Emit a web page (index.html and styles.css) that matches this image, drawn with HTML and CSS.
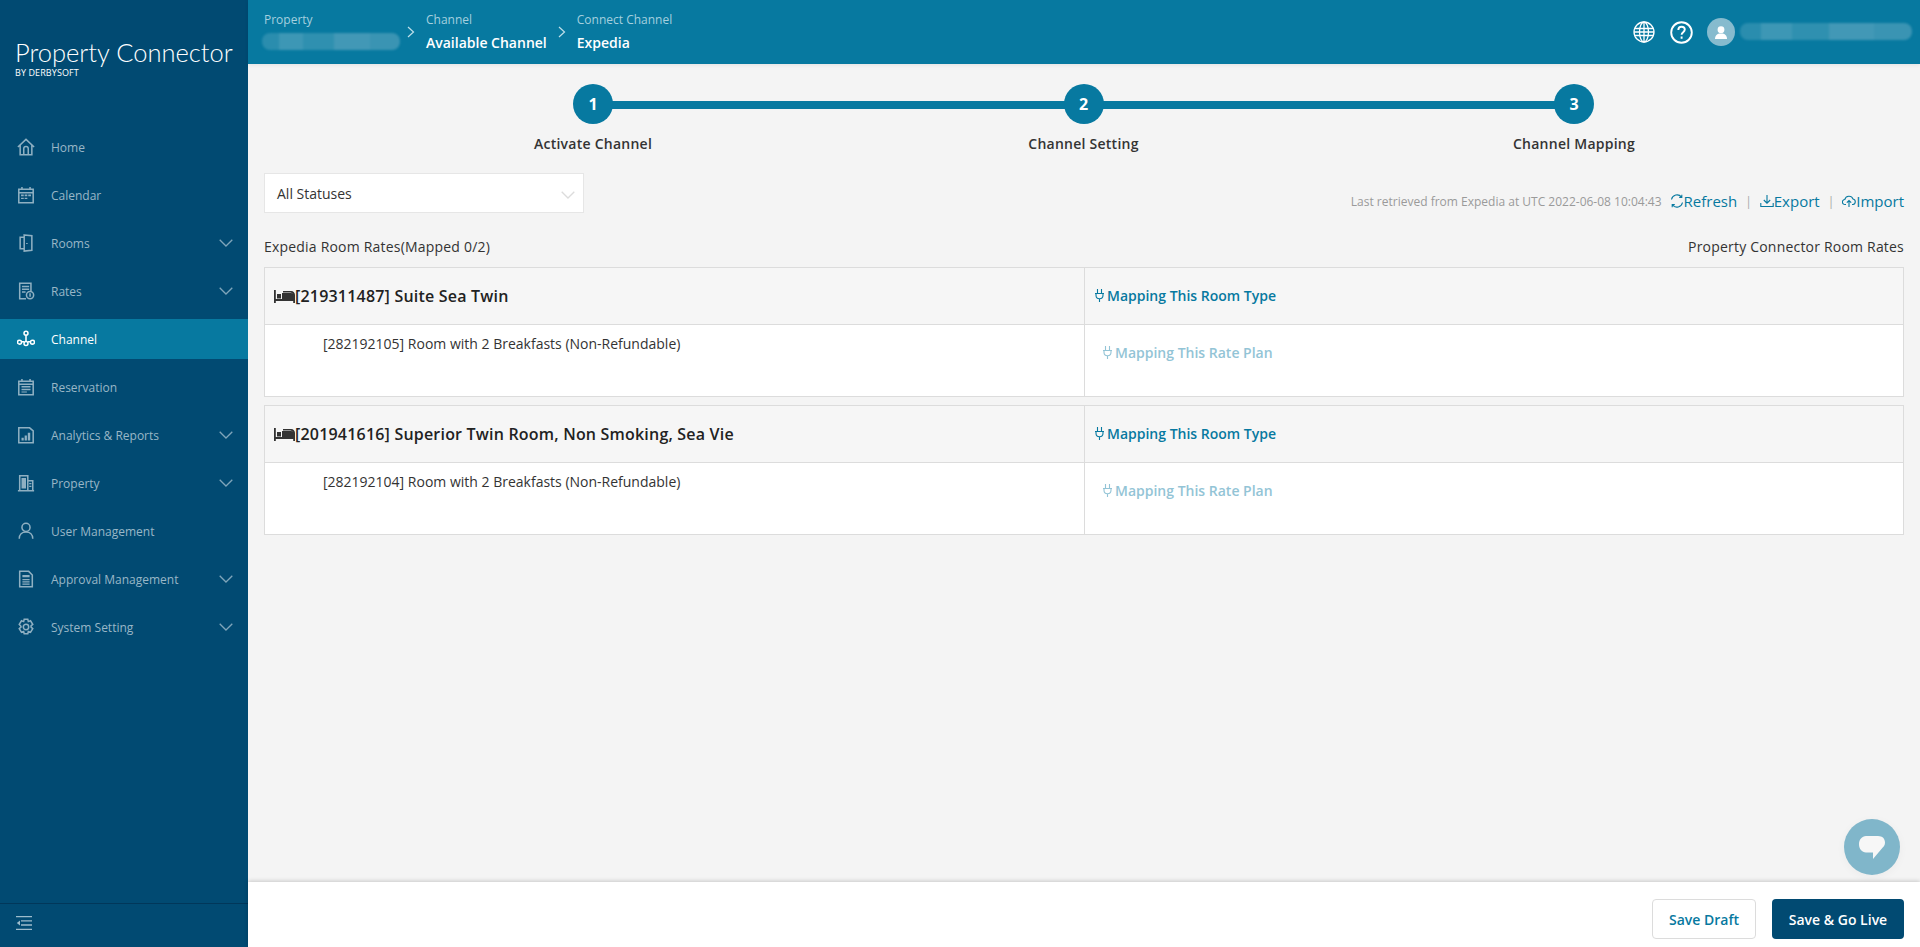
FILE: index.html
```html
<!DOCTYPE html>
<html lang="en">
<head>
  <meta charset="UTF-8" />
  <title>Property Connector</title>
  <link rel="stylesheet" href="styles.css">
</head>
<body>
  <svg class="sprite" width="0" height="0">
    <symbol id="plug" viewBox="0 0 9 13">
      <path d="M0 4.500h9M1 4.500v1.700a3.500 3.500 0 0 0 7 0V4.500M2.500 4.500V0M6.500 4.500V0M4.500 9.500V13" fill="none" stroke="currentColor" stroke-width="1.100"/>
    </symbol>
    <symbol id="bed" viewBox="0 0 21 13">
      <path d="M0 0h1.800v9h17.400V5.500c0-1.600-1.300-3-3-3H9V1h8.200c2.200 0 3.800 1.800 3.800 4v8h-1.800v-2H1.800v2H0z" fill="#333"/>
      <path d="M8 3h9c1.800 0 3 1.300 3 3v3H8zM3 4h4v4.500H3z" fill="#333"/>
    </symbol>
    <symbol id="chev" viewBox="0 0 14 8">
      <path d="M.7.7 7 7l6.300-6.300" fill="none" stroke="currentColor" stroke-width="1.300"/>
    </symbol>
  </svg>

  <div class="app">
    <aside class="sidebar">
      <div class="logo">
        <div class="logo-name">Property Connector</div>
        <div class="logo-by">BY DERBYSOFT</div>
      </div>
      <nav class="menu">
        <a class="menu-item">
          <svg class="menu-icon" viewBox="0 0 20 20"><path d="M1 10 10 1.500l9 8.500M3.500 8v10.500h13V8M7.500 18.500V12a2.500 2.500 0 0 1 5 0v6.500" /></svg>
          <span>Home</span>
        </a>
        <a class="menu-item">
          <svg class="menu-icon" viewBox="0 0 20 20"><path d="M2 3.500h16v15H2zM5.500 1v3.500M14.500 1v3.500M2 7.500h16" /><path class="solid" d="M4.500 9.500h3v2h-3zM8.500 9.500h3v2h-3zM12.500 9.500h3v2h-3zM4.500 13h3v1.500h-3zM8.500 13h3v1.500h-3z" /></svg>
          <span>Calendar</span>
        </a>
        <a class="menu-item">
          <svg class="menu-icon" viewBox="0 0 20 20"><path d="M8 3.500H3.500v13H8M8 1l8.500 1v16L8 19zM11 10v1" /></svg>
          <span>Rooms</span>
          <svg class="menu-chev"><use href="#chev"/></svg>
        </a>
        <a class="menu-item">
          <svg class="menu-icon" viewBox="0 0 20 20"><path d="M10 18.500H3V1.500h12.500V10M5.500 5h8M5.500 8h8M5.500 11h4" /><circle cx="14.500" cy="14.500" r="4"/><path d="M14.500 12.500v4" /></svg>
          <span>Rates</span>
          <svg class="menu-chev"><use href="#chev"/></svg>
        </a>
        <a class="menu-item active">
          <svg class="menu-icon" viewBox="0 0 20 20"><circle cx="10" cy="3.500" r="2.200"/><circle cx="2.800" cy="13.500" r="2.200"/><circle cx="10" cy="15" r="2.200"/><circle cx="17.200" cy="13.500" r="2.200"/><path d="M10 5.700v7M5 13h2.800M12.200 13h2.800" /></svg>
          <span>Channel</span>
        </a>
        <a class="menu-item">
          <svg class="menu-icon" viewBox="0 0 20 20"><path d="M2 3.500h16v15H2zM5.500 1v3.500M14.500 1v3.500M2 7h16" /><path class="solid" d="M5 9h10v1.500H5zM5 12h10v1.500H5zM5 15h6v1.200H5z" /></svg>
          <span>Reservation</span>
        </a>
        <a class="menu-item">
          <svg class="menu-icon" viewBox="0 0 20 20"><path d="M2 2h12l4 3.500v13H2z" /><path class="solid" d="M5 13h2.500v3H5zM8.500 10.500H11V16H8.500zM12 7.500h2.700V16H12z" /></svg>
          <span>Analytics &amp; Reports</span>
          <svg class="menu-chev"><use href="#chev"/></svg>
        </a>
        <a class="menu-item">
          <svg class="menu-icon" viewBox="0 0 20 20"><path d="M3 18V2h9v16M12 7.500h5.500V18M1 18.500h18" /><path class="solid" d="M5 4.500h5V16H5zM13.500 10h2.500v1.500h-2.500zM13.500 13h2.500v1.500h-2.500z" /></svg>
          <span>Property</span>
          <svg class="menu-chev"><use href="#chev"/></svg>
        </a>
        <a class="menu-item">
          <svg class="menu-icon" viewBox="0 0 20 20"><circle cx="10" cy="6" r="4.500"/><path d="M2.500 18.500c0-4.500 3-7.500 7.500-7.500s7.500 3 7.500 7.500" /></svg>
          <span>User Management</span>
        </a>
        <a class="menu-item">
          <svg class="menu-icon" viewBox="0 0 20 20"><path d="M3 1.500h10l4 4v13H3z" /><path class="solid" d="M6 5.500h8v2.500H6zM6 10h8v1.300H6zM6 12.500h8v1.300H6zM6 15h8v1.300H6z" /></svg>
          <span>Approval Management</span>
          <svg class="menu-chev"><use href="#chev"/></svg>
        </a>
        <a class="menu-item">
          <svg class="menu-icon" viewBox="0 0 20 20"><path d="M8 1.500h4l.6 2.500 2.400-.9 2.500 4-1.900 1.700v1.400l1.900 1.700-2.500 4-2.400-.9-.6 2.500H8l-.6-2.500-2.400.9-2.500-4 1.900-1.700V9.300L2.500 7.100l2.500-4 2.400.9z"/><circle cx="10" cy="10" r="3"/></svg>
          <span>System Setting</span>
          <svg class="menu-chev"><use href="#chev"/></svg>
        </a>
      </nav>
      <div class="sidebar-foot">
        <svg class="collapse-icon" viewBox="0 0 16 14"><path d="M0 .7h16M5 4.800h11M5 9h11M0 13.300h16" fill="none" stroke="currentColor" stroke-width="1.300"/><path d="M4 4.500v5L.8 7z" fill="currentColor"/></svg>
      </div>
    </aside>

    <div class="main">
      <header class="topbar">
        <div class="crumb crumb-first">
          <div class="crumb-label">Property</div>
          <div class="blur-name blur-property"></div>
        </div>
        <svg class="crumb-sep" viewBox="0 0 8 12"><path d="M1 1l5.500 5L1 11" /></svg>
        <div class="crumb crumb-mid">
          <div class="crumb-label">Channel</div>
          <div class="crumb-value">Available Channel</div>
        </div>
        <svg class="crumb-sep" viewBox="0 0 8 12"><path d="M1 1l5.500 5L1 11" /></svg>
        <div class="crumb">
          <div class="crumb-label">Connect Channel</div>
          <div class="crumb-value">Expedia</div>
        </div>
        <div class="top-actions">
          <svg class="top-icon" viewBox="0 0 22 22"><circle cx="11" cy="11" r="10"/><ellipse cx="11" cy="11" rx="4.500" ry="10"/><path d="M11 1v20M1.800 7.500h18.400M1.800 14.500h18.400M1 11h20"/></svg>
          <svg class="top-icon help" viewBox="0 0 23 23"><circle cx="11.500" cy="11.500" r="10.300"/><path d="M8.300 9c0-2.200 1.500-3.300 3.300-3.300 1.900 0 3.200 1.200 3.200 2.900 0 2.500-3.200 2.600-3.200 5.100M11.600 15.500v2.200"/></svg>
          <div class="avatar">
            <svg viewBox="0 0 12 13" width="12" height="13"><circle cx="6" cy="3.700" r="3.400" fill="#fff"/><path d="M0 13c0-3.500 2-5.500 6-5.500s6 2 6 5.500z" fill="#fff"/></svg>
          </div>
          <div class="blur-name blur-user"></div>
        </div>
      </header>

      <main class="content">
        <div class="steps">
          <div class="step">
            <div class="step-num">1</div>
            <div class="step-label">Activate Channel</div>
          </div>
          <div class="step">
            <div class="step-num">2</div>
            <div class="step-label">Channel Setting</div>
          </div>
          <div class="step">
            <div class="step-num">3</div>
            <div class="step-label">Channel Mapping</div>
          </div>
        </div>

        <div class="toolbar">
          <div class="status-select">
            <span>All Statuses</span>
            <svg class="select-chev"><use href="#chev"/></svg>
          </div>
          <div class="tools">
            <span class="retrieved">Last retrieved from Expedia at UTC 2022-06-08 10:04:43</span>
            <a class="tool">
              <svg viewBox="0 0 14 14" width="14" height="14"><path d="M1.500 5.500A5.700 5.700 0 0 1 11.500 3M12.500 8.500A5.700 5.700 0 0 1 2.500 11M11.800.8v2.600H9.200M2.200 13.200v-2.600h2.600" fill="none" stroke="currentColor" stroke-width="1.100"/></svg>Refresh
            </a>
            <span class="tool-sep">|</span>
            <a class="tool">
              <svg viewBox="0 0 14 14" width="14" height="14"><path d="M7 1v8M3.800 6 7 9.200 10.200 6M.8 9v3.500h12.400V9" fill="none" stroke="currentColor" stroke-width="1.100"/></svg>Export
            </a>
            <span class="tool-sep">|</span>
            <a class="tool">
              <svg viewBox="0 0 14 14" width="14" height="14"><path d="M4 10.500H3A2.500 2.500 0 0 1 2.800 5.500 4.300 4.300 0 0 1 11 5a2.800 2.800 0 0 1 0 5.500h-1M7 13V6.500M4.800 8.700 7 6.500l2.200 2.200" fill="none" stroke="currentColor" stroke-width="1.100"/></svg>Import
            </a>
          </div>
        </div>

        <div class="rates-head">
          <span>Expedia Room Rates(Mapped 0/2)</span>
          <span>Property Connector Room Rates</span>
        </div>

        <section class="room-card">
          <div class="room-title"><svg class="bed"><use href="#bed"/></svg>[219311487] Suite Sea Twin</div>
          <div class="room-map"><a class="map-link"><svg class="plug"><use href="#plug"/></svg>Mapping This Room Type</a></div>
          <div class="rate-name">[282192105] Room with 2 Breakfasts (Non-Refundable)</div>
          <div class="rate-map"><a class="map-link disabled"><svg class="plug"><use href="#plug"/></svg>Mapping This Rate Plan</a></div>
        </section>

        <section class="room-card">
          <div class="room-title"><svg class="bed"><use href="#bed"/></svg>[201941616] Superior Twin Room, Non Smoking, Sea Vie</div>
          <div class="room-map"><a class="map-link"><svg class="plug"><use href="#plug"/></svg>Mapping This Room Type</a></div>
          <div class="rate-name">[282192104] Room with 2 Breakfasts (Non-Refundable)</div>
          <div class="rate-map"><a class="map-link disabled"><svg class="plug"><use href="#plug"/></svg>Mapping This Rate Plan</a></div>
        </section>

        <button class="chat-btn">
          <svg viewBox="0 0 28 25" width="28" height="25"><path d="M8 1h12c4.500 0 7 2.800 7 6.500 0 2.500-1 3.700-2.500 5.300L15 24v-6.500H8c-4 0-7-3.500-7-8.200S4 1 8 1z" fill="#f7f7f7"/></svg>
        </button>
      </main>

      <footer class="footer">
        <button class="btn btn-plain">Save Draft</button>
        <button class="btn btn-primary">Save &amp; Go Live</button>
      </footer>
    </div>
  </div>
</body>
</html>
```

FILE: styles.css
```css
* {
  box-sizing: border-box;
}

html, body {
  height: 100%;
}

body {
  margin: 0;
  font-family: 'Open Sans', sans-serif;
  font-size: 14px;
  color: #333;
  background: #f4f4f4;
  overflow: hidden;
}

.sprite {
  position: absolute;
}

.app {
  display: flex;
  height: 947px;
}

/* sidebar */
.sidebar {
  width: 248px;
  flex: none;
  display: flex;
  flex-direction: column;
  background: #014a72;
}

.logo {
  height: 127px;
  padding: 38px 0 0 15px;
  color: #fff;
}

.logo-name {
  font-family: Lato, sans-serif;
  font-size: 25.500px;
  font-weight: 300;
  line-height: 29px;
  white-space: nowrap;
}

.logo-by {
  font-size: 9px;
  line-height: 12px;
  margin-top: 0;
  letter-spacing: 0.1px;
}

.menu {
  flex: 1;
  display: flex;
  flex-direction: column;
  gap: 8px;
}

.menu-item {
  height: 40px;
  display: flex;
  align-items: center;
  padding: 0 15px 0 17px;
  font-size: 12px;
  color: #99b7c7;
}

.menu-item.active {
  background: #0779a0;
  color: #fff;
}

.menu-icon {
  width: 18px;
  height: 18px;
  margin-right: 16px;
  fill: none;
  stroke: #8fb0c2;
  stroke-width: 1.700;
}

.menu-icon .solid {
  fill: #8fb0c2;
  stroke: none;
}

.active .menu-icon {
  stroke: #fff;
}

.menu-chev {
  width: 14px;
  height: 8px;
  margin-left: auto;
  color: #7fa5ba;
}

.sidebar-foot {
  height: 44px;
  border-top: 1px solid #01375a;
  padding: 12px 0 0 16px;
}

.collapse-icon {
  display: block;
  width: 16px;
  height: 14px;
  color: #9dbccc;
}

/* top bar */
.main {
  flex: 1;
  min-width: 0;
  display: flex;
  flex-direction: column;
}

.topbar {
  height: 64px;
  flex: none;
  display: flex;
  align-items: center;
  padding: 0 8px 0 16px;
  background: #0779a0;
  color: #fff;
  box-shadow: 0 1px 4px rgba(0, 0, 0, 0.08);
}

.crumb-first {
  width: 134px;
}

.crumb-mid {
  margin-right: 2px;
}

.crumb-label {
  font-size: 12px;
  line-height: 16px;
  color: #a5d0df;
}

.crumb-value {
  font-size: 14px;
  font-weight: 600;
  line-height: 19px;
  margin-top: 5px;
}

.blur-name {
  background: linear-gradient(90deg,
    #2a8dae 0 12%, #3d97b5 12% 30%, #2f90b0 30% 52%, #4298b6 52% 78%, #3a94b3 78% 100%);
  border-radius: 8px;
  filter: blur(1px);
}

.blur-property {
  height: 17px;
  margin: 5px -2px 3px -2px;
}

.crumb-sep {
  width: 8px;
  height: 12px;
  margin: 0 11px 0 9px;
  fill: none;
  stroke: #bfe0ea;
  stroke-width: 1.200;
}

.top-actions {
  margin-left: auto;
  display: flex;
  align-items: center;
}

.top-icon {
  width: 22px;
  height: 22px;
  margin-right: 15px;
  fill: none;
  stroke: #fff;
  stroke-width: 1.300;
}

.top-icon.help {
  width: 23px;
  height: 23px;
  margin-right: 14px;
  stroke-width: 1.900;
}

.avatar {
  width: 28px;
  height: 28px;
  border-radius: 50%;
  background: #86bbce;
  display: flex;
  align-items: center;
  justify-content: center;
}

.blur-user {
  width: 172px;
  height: 17px;
  margin: -1px 0 0 5px;
}

/* page content */
.content {
  flex: 1;
  position: relative;
  padding: 20px 16px 0;
}

.steps {
  display: grid;
  grid-template-columns: repeat(3, 490.500px);
  padding-left: 209px;
}

.step {
  position: relative;
  width: 240px;
  display: flex;
  flex-direction: column;
  align-items: center;
}

.step:not(:last-child)::after {
  content: '';
  position: absolute;
  top: 17px;
  left: 120px;
  width: 491px;
  height: 8px;
  background: #0779a0;
}

.step-num {
  position: relative;
  z-index: 1;
  width: 40px;
  height: 40px;
  border-radius: 50%;
  background: #0779a0;
  color: #fff;
  font-size: 16px;
  font-weight: 700;
  line-height: 40px;
  text-align: center;
}

.step-label {
  margin-top: 10px;
  font-size: 14px;
  font-weight: 600;
  line-height: 19px;
  letter-spacing: 0.25px;
}

.toolbar {
  display: flex;
  justify-content: space-between;
  margin-top: 20px;
}

.status-select {
  width: 320px;
  height: 40px;
  display: flex;
  align-items: center;
  justify-content: space-between;
  padding: 0 8px 0 12px;
  background: #fff;
  border: 1px solid #e6e6e6;
}

.select-chev {
  width: 14px;
  height: 8px;
  color: #dcdcdc;
  margin-top: 3px;
}

.tools {
  display: flex;
  align-items: center;
  align-self: flex-end;
  height: 20px;
  margin-bottom: 2px;
}

.retrieved {
  font-size: 12px;
  color: #9a9a9a;
  margin-right: 8px;
}

.tool {
  display: flex;
  align-items: center;
  font-size: 15px;
  color: #0779a0;
}

.tool-sep {
  font-size: 12px;
  color: #a8a8a8;
  margin: 0 8px;
}

.rates-head {
  display: flex;
  justify-content: space-between;
  margin-top: 24px;
  margin-bottom: 10px;
  line-height: 20px;
  letter-spacing: 0.2px;
}

.room-card {
  display: grid;
  grid-template-columns: 819px 1fr;
  grid-template-rows: 57px 71px;
  background: #fff;
  border: 1px solid #dcdcdc;
  margin-bottom: 8px;
}

.room-title,
.room-map {
  display: flex;
  align-items: center;
  background: #f6f6f6;
  border-bottom: 1px solid #dcdcdc;
}

.room-title {
  padding-left: 9px;
  font-size: 16px;
  font-weight: 600;
  letter-spacing: 0.2px;
  color: #222;
}

.bed {
  width: 21px;
  height: 13px;
  flex: none;
}

.room-map {
  padding: 0 0 1px 10px;
  border-left: 1px solid #dcdcdc;
}

.rate-name {
  padding: 9px 0 0 58px;
  line-height: 19px;
}

.rate-map {
  padding: 18px 0 0 18px;
  border-left: 1px solid #dcdcdc;
}

.map-link {
  display: inline-flex;
  align-items: center;
  font-weight: 600;
  line-height: 19px;
  color: #0779a0;
}

.map-link.disabled {
  color: #93c4d6;
}

.plug {
  width: 9px;
  height: 13px;
  margin-right: 3px;
}

.chat-btn {
  position: absolute;
  right: 20px;
  bottom: 7px;
  width: 56px;
  height: 56px;
  padding: 4px 0 0;
  border: none;
  border-radius: 50%;
  background: #80b6ca;
  box-shadow: 0 2px 10px rgba(0, 0, 0, 0.04);
}

/* footer */
.footer {
  height: 65px;
  flex: none;
  display: flex;
  justify-content: flex-end;
  align-items: flex-start;
  gap: 16px;
  padding: 17px 16px 0;
  background: #fff;
  box-shadow: 0 -1px 4px rgba(0, 0, 0, 0.18);
}

.btn {
  height: 40px;
  border-radius: 4px;
  font-family: inherit;
  font-size: 14px;
  font-weight: 600;
}

.btn-plain {
  width: 104px;
  background: #fff;
  border: 1px solid #dcdcdc;
  color: #0779a0;
}

.btn-primary {
  width: 132px;
  background: #014a72;
  border: none;
  color: #fff;
}
```
